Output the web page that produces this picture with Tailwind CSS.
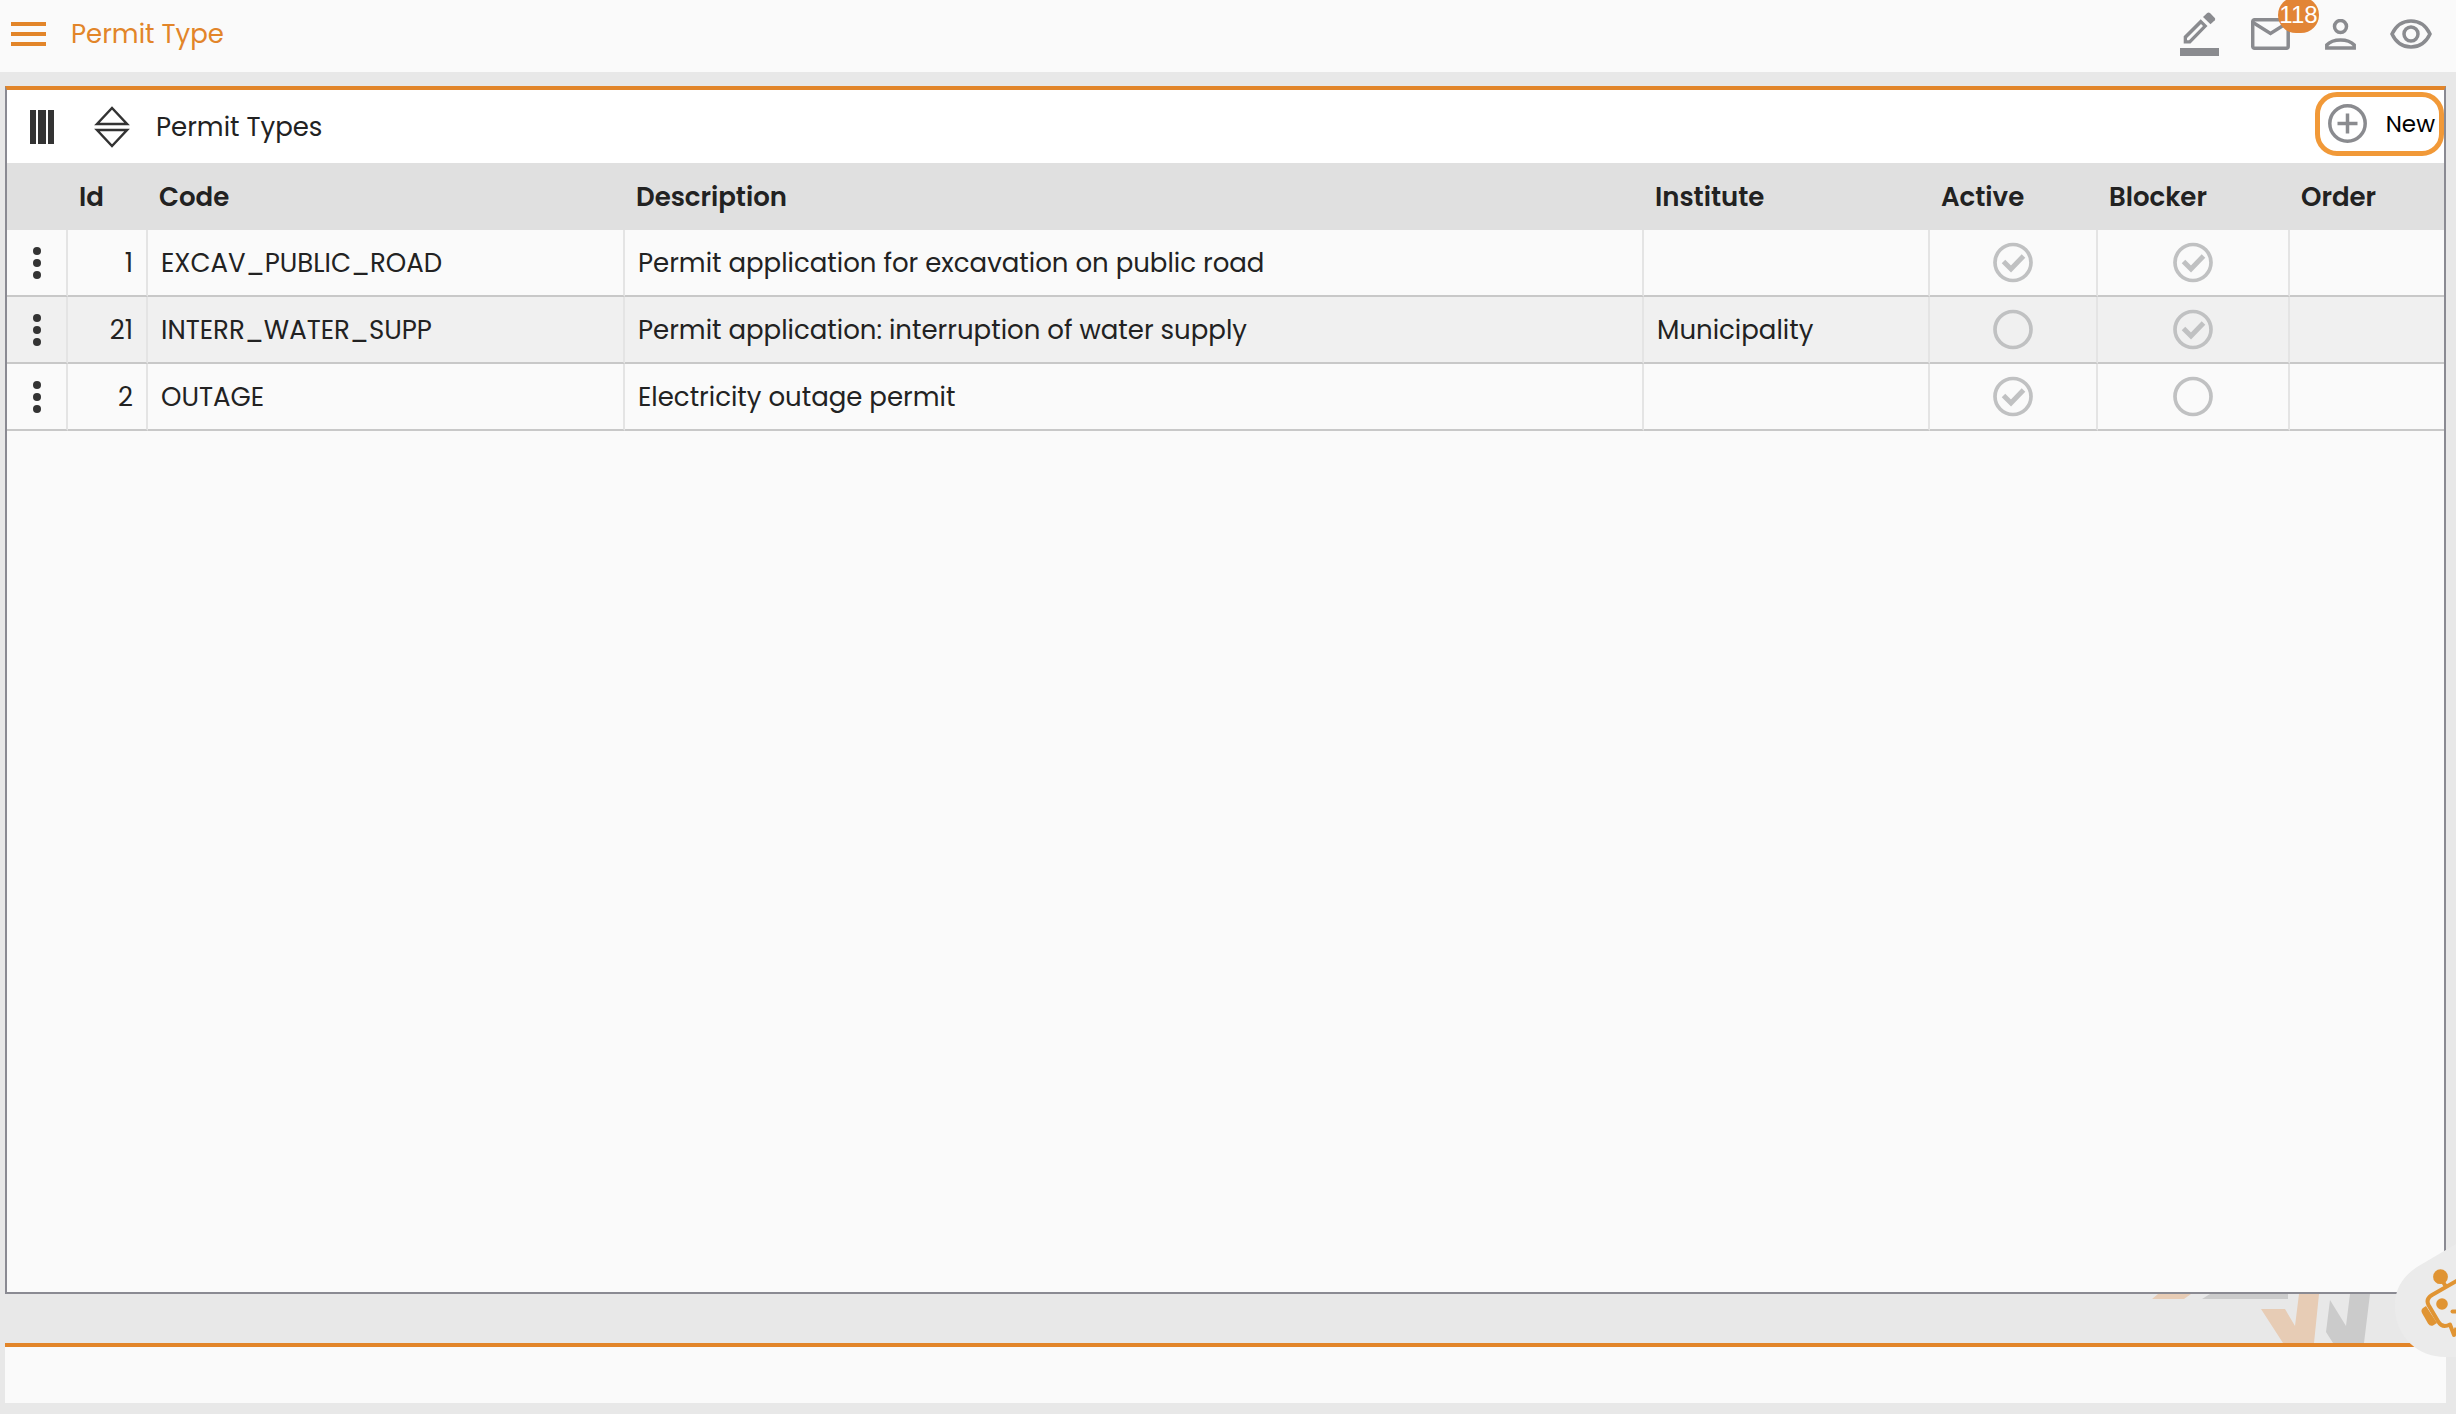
<!DOCTYPE html>
<html lang="en">
  <head>
    <meta charset="UTF-8" />
    <meta name="viewport" content="width=device-width, initial-scale=1.0" />
    <title>Permit Type</title>
    <script src="https://cdn.jsdelivr.net/npm/@tailwindcss/browser@4"></script>
  </head>
  <body
    class="h-screen flex flex-col overflow-hidden bg-[#e8e8e8] text-[#222222] text-[26px] leading-8 font-[Poppins,Inter,sans-serif]"
  >
    <header class="h-[72px] shrink-0 flex items-center justify-between bg-[#fafafa] pl-[11px] pr-6 pb-1">
      <div class="flex items-center gap-[25px] text-[#e28529]">
        <button type="button" aria-label="Menu">
          <svg class="w-[35px] h-6" viewBox="0 0 35 24" fill="currentColor">
            <path d="M0 0h35v4H0zM0 10h35v4H0zM0 20h35v4H0z" />
          </svg>
        </button>
        <h1>Permit Type</h1>
      </div>
      <nav class="flex items-center text-[#8a8b8f]">
        <button type="button" aria-label="Edit" class="mr-[31px]">
          <svg class="w-10 h-11" viewBox="0 0 40 44" fill="currentColor">
            <path
              fill-rule="evenodd"
              d="M3.700 24.300 20.700 7.300 27.500 14 10.500 31.500H3.700zM7 26V28.200H9L23 14 21 12z"
            />
            <path d="M27.200 1Q28.500 0 30 1L34.800 6Q35.700 7 34.800 8.200L30.500 12.300 23 5z" />
            <path d="M0 36h39v8H0z" />
          </svg>
        </button>
        <button type="button" aria-label="Messages" class="relative mr-[35px]">
          <svg class="w-[39px] h-8" viewBox="0 0 39 32" fill="none" stroke="currentColor" stroke-width="3.500">
            <rect x="1.700" y="1.700" width="35.500" height="28.600" rx="2" />
            <path d="M2 4.500 19.500 15.500 37 4.500" />
          </svg>
          <span
            class="absolute left-[27px] -top-[21px] h-9 w-[41px] flex items-center justify-center rounded-full bg-[#e28536] text-white text-2xl font-['Liberation_Sans',sans-serif]"
            >118</span
          >
        </button>
        <button type="button" aria-label="Profile" class="mr-[34px]">
          <svg class="w-[31px] h-[31px]" viewBox="0 0 31 31" fill="none" stroke="currentColor" stroke-width="3.500">
            <circle cx="15.500" cy="7.500" r="6" />
            <path d="M1.800 29V26C5 22.500 10 21 15.500 21S26 22.500 29.200 26V29Z" />
          </svg>
        </button>
        <button type="button" aria-label="View">
          <svg class="w-[42px] h-[30px]" viewBox="0 0 42 30" fill="none" stroke="currentColor" stroke-width="3.500">
            <path d="M2 15C6 6.500 13 2 21 2S36 6.500 40 15C36 23.500 29 28 21 28S6 23.500 2 15Z" />
            <circle cx="21" cy="15" r="7" />
          </svg>
        </button>
      </nav>
    </header>

    <main class="mt-[14px] ml-[5px] mr-[10px] flex-1 min-h-0 flex flex-col border-2 border-t-4 border-[#8a8a92] border-t-[#e28529] bg-[#fafafa]">
      <div class="h-[73px] shrink-0 flex items-center justify-between bg-white pl-[23px]">
        <div class="flex items-center">
          <button type="button" aria-label="Columns" class="mr-10">
            <svg class="w-6 h-[34px]" viewBox="0 0 24 34" fill="#333333">
              <path d="M0 0h6v34H0zM8 0h8v34H8zM18 0h6v34h-6z" />
            </svg>
          </button>
          <button type="button" aria-label="Sort" class="mr-[26px]">
            <svg class="w-9 h-[42px]" viewBox="0 0 36 42" fill="none" stroke="#333333" stroke-width="2.500">
              <path d="M3 18 18 2 33 18Z M3 24 18 40 33 24Z" />
            </svg>
          </button>
          <h2>Permit Types</h2>
        </div>
        <button
          type="button"
          class="h-16 w-[129px] mb-[6px] flex items-center justify-between rounded-[22px] border-[5px] border-[#f19938] pl-2 pr-1 text-black text-[23px]"
        >
          <svg class="w-[39px] h-[39px]" viewBox="0 0 39 39" fill="none" stroke="#8a8b8f" stroke-width="3.500">
            <circle cx="19.500" cy="19.500" r="17.700" />
            <path d="M19.500 9.500v20M9.500 19.500h20" />
          </svg>
          New
        </button>
      </div>

      <table class="w-full table-fixed border-separate border-spacing-0">
        <colgroup>
          <col class="w-[61px]" />
          <col class="w-20" />
          <col class="w-[477px]" />
          <col />
          <col class="w-[286px]" />
          <col class="w-[168px]" />
          <col class="w-[192px]" />
          <col class="w-[154px]" />
        </colgroup>
        <thead>
          <tr class="h-[67px] bg-[#e0e0e0] text-left">
            <td></td>
            <th class="pl-[11px] font-semibold">Id</th>
            <th class="pl-[11px] font-semibold">Code</th>
            <th class="pl-[11px] font-semibold">Description</th>
            <th class="pl-[11px] font-semibold">Institute</th>
            <th class="pl-[11px] font-semibold">Active</th>
            <th class="pl-[11px] font-semibold">Blocker</th>
            <th class="pl-[11px] font-semibold">Order</th>
          </tr>
        </thead>
        <tbody id="permitRows"></tbody>
      </table>
    </main>

    <!-- watermark strip -->
    <div class="h-[49px] shrink-0 flex justify-end pr-[86px]">
      <svg class="w-[220px] h-[49px]" viewBox="2150 1294 220 49">
        <path fill="#e7ccb5" d="M2158 1294H2191L2184 1299H2152ZM2261 1309H2285L2295 1326 2299 1294H2319L2314 1343H2283Z" />
        <path fill="#cbcbcb" d="M2210 1294H2288V1299H2202ZM2330 1300 2346 1326 2350 1294H2370L2364 1343H2333L2326 1332Z" />
      </svg>
    </div>

    <footer class="h-[60px] shrink-0 ml-[5px] mr-[10px] mb-[11px] border-t-4 border-[#e28529] bg-[#fafafa]"></footer>

    <!-- chat assistant, half tucked behind the window edge -->
    <button type="button" aria-label="Assistant" class="absolute right-0 bottom-[54px]">
      <svg class="w-[63px] h-[116px]" viewBox="0 0 63 116">
        <path fill="#ebebeb" d="M63 0 24 23C9 33 1 46 2 65 3 93 25 113 52 113H63Z" />
        <g fill="#e09433">
          <circle cx="47.500" cy="32.700" r="7.400" />
          <circle cx="49" cy="60" r="5.800" />
          <path d="M33 62 30 64Q27.500 66 29 69L35 79.500Q37 82.500 40 81.500L44 79Z" />
        </g>
        <g fill="none" stroke="#e09433" stroke-width="4" stroke-linejoin="round">
          <path d="M49.500 37 52.500 42M66 35.500 39 51Q32.500 55 35.500 61L45.500 78Q49.500 84.500 57 80.500L61 91 63.500 84" />
          <path d="M59.500 67.500H64" stroke-linecap="round" />
        </g>
      </svg>
    </button>

    <script>
      const permits = [
        { id: 1, code: "EXCAV_PUBLIC_ROAD", description: "Permit application for excavation on public road", institute: "", active: true, blocker: true },
        { id: 21, code: "INTERR_WATER_SUPP", description: "Permit application: interruption of water supply", institute: "Municipality", active: false, blocker: true },
        { id: 2, code: "OUTAGE", description: "Electricity outage permit", institute: "", active: true, blocker: false },
      ];

      function checkCell(label, checked) {
        return `
          <label class="relative block w-10 h-[43px] mx-auto">
            <input type="checkbox" aria-label="${label}" class="absolute inset-0 appearance-none" ${checked ? "checked" : ""} />
            <svg class="w-10 h-[43px]" viewBox="0 0 40 43" fill="none" stroke="#c0c1c2">
              <circle cx="20" cy="21.500" r="18" stroke-width="3.700" />
              ${checked ? '<path d="M10.500 20.500 18 28 30.500 15" stroke-width="5" />' : ""}
            </svg>
          </label>`;
      }

      document.getElementById("permitRows").innerHTML = permits
        .map(
          (permit) => `
          <tr class="h-[67px] even:bg-[#f0f0f0]">
            <td class="border-r-2 border-r-[#e4e4e4] border-b-2 border-b-[#c8c8c8]">
              <button type="button" aria-label="Row menu" class="block mx-auto">
                <svg class="w-2 h-8" viewBox="0 0 8 32" fill="#333333">
                  <circle cx="4" cy="4" r="4" /><circle cx="4" cy="16" r="4" /><circle cx="4" cy="28" r="4" />
                </svg>
              </button>
            </td>
            <td class="border-r-2 border-r-[#e4e4e4] border-b-2 border-b-[#c8c8c8] pr-[13px] text-right">${permit.id}</td>
            <td class="border-r-2 border-r-[#e4e4e4] border-b-2 border-b-[#c8c8c8] pl-[13px]">${permit.code}</td>
            <td class="border-r-2 border-r-[#e4e4e4] border-b-2 border-b-[#c8c8c8] pl-[13px]">${permit.description}</td>
            <td class="border-r-2 border-r-[#e4e4e4] border-b-2 border-b-[#c8c8c8] pl-[13px]">${permit.institute}</td>
            <td class="border-r-2 border-r-[#e4e4e4] border-b-2 border-b-[#c8c8c8]">${checkCell("Active", permit.active)}</td>
            <td class="border-r-2 border-r-[#e4e4e4] border-b-2 border-b-[#c8c8c8]">${checkCell("Blocker", permit.blocker)}</td>
            <td class="border-b-2 border-b-[#c8c8c8]"></td>
          </tr>`
        )
        .join("");
    </script>
  </body>
</html>
